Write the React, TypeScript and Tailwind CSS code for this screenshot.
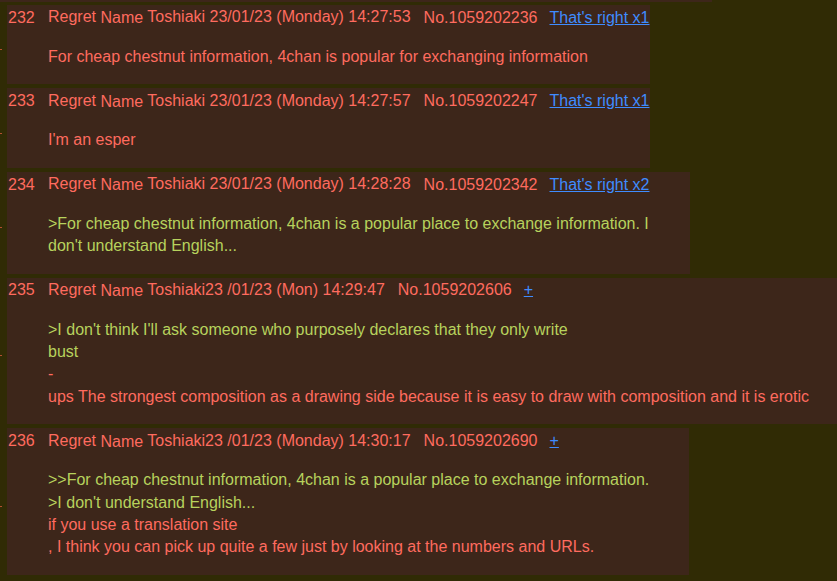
type Line = { text: string; quote?: boolean };

interface Post {
  no: number;
  who: string;
  when: string;
  id: string;
  link: string;
  width: string;
  lines: Line[];
}

const posts: Post[] = [
  {
    no: 232,
    who: "Toshiaki",
    when: " 23/01/23 (Monday) 14:27:53",
    id: "No.1059202236",
    link: "That's right x1",
    width: "w-[643px]",
    lines: [{ text: "For cheap chestnut information, 4chan is popular for exchanging information" }],
  },
  {
    no: 233,
    who: "Toshiaki",
    when: " 23/01/23 (Monday) 14:27:57",
    id: "No.1059202247",
    link: "That's right x1",
    width: "w-[643px]",
    lines: [{ text: "I'm an esper" }],
  },
  {
    no: 234,
    who: "Toshiaki",
    when: " 23/01/23 (Monday) 14:28:28",
    id: "No.1059202342",
    link: "That's right x2",
    width: "w-[683px]",
    lines: [
      { text: ">For cheap chestnut information, 4chan is a popular place to exchange information. I", quote: true },
      { text: "don't understand English...", quote: true },
    ],
  },
  {
    no: 235,
    who: "Toshiaki23",
    when: " /01/23 (Mon) 14:29:47",
    id: "No.1059202606",
    link: "+",
    width: "flex-1",
    lines: [
      { text: ">I don't think I'll ask someone who purposely declares that they only write", quote: true },
      { text: "bust", quote: true },
      { text: "-" },
      { text: "ups The strongest composition as a drawing side because it is easy to draw with composition and it is erotic" },
    ],
  },
  {
    no: 236,
    who: "Toshiaki23",
    when: " /01/23 (Monday) 14:30:17",
    id: "No.1059202690",
    link: "+",
    width: "w-[682px]",
    lines: [
      { text: ">>For cheap chestnut information, 4chan is a popular place to exchange information.", quote: true },
      { text: ">I don't understand English...", quote: true },
      { text: "if you use a translation site" },
      { text: ", I think you can pick up quite a few just by looking at the numbers and URLs." },
    ],
  },
];

function Reply({ post }: { post: Post }) {
  return (
    <div className="flex">
      {/* side marker */}
      <div className="w-[7px] flex items-center">
        <span className="mt-[10px] h-px w-[2px] bg-[#b4502e]"></span>
      </div>

      <div className={`${post.width} bg-[#3d261a] pl-px pt-[2px] pb-[16px]`}>
        <div className="flex h-[22px] items-center whitespace-nowrap">
          <span className="w-[40px]">{post.no}</span>
          <span>
            Regret <span className="align-[-1px]">Name</span> {post.who}
            {post.when}
          </span>
          <span className="ml-[13px]">{post.id}</span>
          <a href="#" className="ml-[12px] text-[#3f8cff] underline">
            {post.link}
          </a>
        </div>

        <div className="mt-[17px] ml-[40px]">
          {post.lines.map((line, i) => (
            <div key={i} className={line.quote ? "text-[#b7d25d]" : ""}>
              {line.text}
            </div>
          ))}
        </div>
      </div>
    </div>
  );
}

export default function App() {
  return (
    <div className="h-[581px] overflow-hidden bg-[#302b05] font-['Liberation_Sans',Arial,sans-serif] text-[16px] leading-[22.4px] text-[#ff6b5f]">
      {/* bottom edge of the previous reply */}
      <div className="h-[2px] w-[712px] bg-[#3d261a]"></div>

      <div className="flex flex-col gap-[4px] pt-[3px]">
        {posts.map((p) => (
          <Reply key={p.no} post={p} />
        ))}
      </div>
    </div>
  );
}
